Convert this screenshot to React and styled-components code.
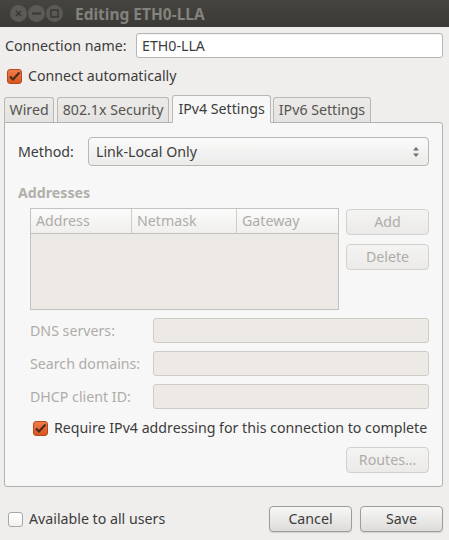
import styled, { createGlobalStyle, css } from 'styled-components';

const GlobalStyle = createGlobalStyle`
  html, body {
    margin: 0;
    padding: 0;
    background: #efeeec;
  }
  body {
    font-family: "Noto Sans", "Open Sans", sans-serif;
    font-size: 14.2px;
    line-height: 18px;
    color: #3c3c3c;
  }
`;

const Window = styled.div`
  width: 449px;
  height: 540px;
  display: flex;
  flex-direction: column;
  background: #efeeec;
  overflow: hidden;
  white-space: nowrap;
`;

const TitleBar = styled.div`
  height: 27px;
  flex: none;
  display: flex;
  align-items: center;
  padding-left: 10px;
  background: linear-gradient(#45443f, #3b3a36);
  box-sizing: border-box;
`;

const WinButtons = styled.div`
  display: flex;
  gap: 1px;
`;

const WinButton = styled.div`
  width: 17px;
  height: 17px;
  border-radius: 50%;
  background: #5b5a55;
  display: flex;
  align-items: center;
  justify-content: center;
`;

const Title = styled.div`
  margin-left: 12px;
  font-weight: bold;
  font-size: 15.5px;
  color: #83827d;
`;

const Body = styled.div`
  flex: 1;
  display: flex;
  flex-direction: column;
  padding: 6px 6px 0 4px;
`;

const Row = styled.div`
  display: flex;
  align-items: center;
  margin-top: ${p => p.$top || 0}px;
  padding-left: ${p => p.$indent || 0}px;
`;

const NameLabel = styled.div`
  width: 131px;
  padding-left: 1px;
`;

const Entry = styled.div`
  flex: 1;
  height: 25px;
  box-sizing: border-box;
  border: 1px solid ${p => (p.$disabled ? '#cfccc8' : '#b8b6b1')};
  border-radius: 3px;
  background: ${p => (p.$disabled ? '#ede9e5' : '#ffffff')};
  display: flex;
  align-items: center;
  padding-left: 5px;
  box-shadow: ${p => (p.$disabled ? 'none' : 'inset 0 1px 1px rgba(0,0,0,0.06)')};
`;

const CheckRow = styled.label`
  display: flex;
  align-items: center;
  gap: 6px;
  height: 18px;
`;

const checkedBox = css`
  background: linear-gradient(#f17c4c, #d9561f);
  border: 1px solid #b44a1e;
`;

const Box = styled.span`
  width: 15px;
  height: 15px;
  box-sizing: border-box;
  border-radius: 3px;
  display: flex;
  align-items: center;
  justify-content: center;
  background: linear-gradient(#ffffff, #f2f1f0);
  border: 1px solid #a9a7a3;
  ${p => p.$checked && checkedBox};
`;

const Tabs = styled.div`
  display: flex;
  align-items: flex-end;
  margin-top: 10px;
  height: 27px;
  position: relative;
  z-index: 1;
`;

const Tab = styled.div`
  height: ${p => (p.$active ? '28px' : '25px')};
  box-sizing: border-box;
  padding: 0 ${p => (p.$active ? 5.5 : 4.5)}px;
  margin-right: ${p => (p.$gap ?? 3)}px;
  display: flex;
  align-items: center;
  border: 1px solid #bab8b4;
  border-bottom: ${p => (p.$active ? '1px solid #f7f7f7' : 'none')};
  border-radius: 3px 3px 0 0;
  background: ${p => (p.$active ? '#f7f7f7' : 'linear-gradient(#ebeae8, #e4e3e1)')};
  color: ${p => (p.$active ? '#3c3c3c' : '#55544f')};
  margin-bottom: ${p => (p.$active ? '-1px' : '0')};
`;

const Page = styled.div`
  height: 365px;
  box-sizing: border-box;
  border: 1px solid #b3b1ad;
  border-radius: 0 3px 3px 3px;
  background: #f7f7f7;
  padding: 14px 13px 0 13px;
  display: flex;
  flex-direction: column;
`;

const MethodLabel = styled.div`
  width: 70px;
`;

const Combo = styled.div`
  flex: 1;
  height: 29px;
  box-sizing: border-box;
  border: 1px solid #b9b7b2;
  border-radius: 4px;
  background: linear-gradient(#fafafa, #ebebea);
  display: flex;
  align-items: center;
  justify-content: space-between;
  padding: 0 8px 0 7px;
`;

const SectionTitle = styled.div`
  margin-top: 18px;
  font-weight: bold;
  color: #b1afaa;
`;

const Addresses = styled.div`
  display: flex;
  margin-top: 6px;
  padding-left: 12px;
  gap: 7px;
`;

const Table = styled.div`
  width: 309px;
  height: 102px;
  box-sizing: border-box;
  border: 1px solid #c4c2be;
  background: #ede9e5;
`;

const TableHead = styled.div`
  display: grid;
  grid-template-columns: 100px 105px 1fr;
  height: 24px;
  background: linear-gradient(#fbfbfb, #f0efee);
  border-bottom: 1px solid #c4c2be;
`;

const HeadCell = styled.div`
  display: flex;
  align-items: center;
  padding-left: 5px;
  color: #aeaca8;
  border-left: ${p => (p.$first ? 'none' : '1px solid #cfcdc9')};
`;

const ButtonCol = styled.div`
  display: flex;
  flex-direction: column;
  gap: 9px;
  padding-top: 1px;
`;

const Button = styled.div`
  width: ${p => p.$width || '83px'};
  height: 26px;
  box-sizing: border-box;
  border-radius: 4px;
  display: flex;
  align-items: center;
  justify-content: center;
  ${p =>
    p.$disabled
      ? css`
          border: 1px solid #d3d1cd;
          background: linear-gradient(#f4f4f3, #eceae8);
          color: #aeaca8;
        `
      : css`
          border: 1px solid #9e9c98;
          background: linear-gradient(#f7f7f6, #dddcda);
          color: #3c3c3c;
          box-shadow: 0 1px 1px rgba(0, 0, 0, 0.12);
        `}
`;

const Fields = styled.div`
  margin-top: 8px;
  padding-left: 12px;
  display: flex;
  flex-direction: column;
  gap: 8px;
`;

const FieldLabel = styled.div`
  width: 123px;
  color: #aeaca8;
`;

const Checks = styled.div`
  margin-top: 10px;
  padding-left: 15px;
`;

const RoutesRow = styled.div`
  display: flex;
  justify-content: flex-end;
  margin-top: 10px;
`;

const Footer = styled.div`
  display: flex;
  align-items: center;
  justify-content: space-between;
  margin-top: 19px;
  padding-left: 4px;
`;

const FooterButtons = styled.div`
  display: flex;
  gap: 8px;
`;

const Tick = () => (
  <svg width="13" height="11" viewBox="0 0 13 11">
    <path d="M2 5.5 L5 8.5 L11.5 1.5" fill="none" stroke="#4a2b1c" strokeWidth="2.2" />
  </svg>
);

const Arrows = () => (
  <svg width="8" height="12" viewBox="0 0 8 12">
    <path d="M4 1 L7 4.5 H1 Z" fill="#6e6d69" />
    <path d="M4 11 L7 7.5 H1 Z" fill="#6e6d69" />
  </svg>
);

const App = () => {
  return (
    <Window>
      <GlobalStyle />
      <TitleBar>
        <WinButtons>
          <WinButton>
            <svg width="7" height="7" viewBox="0 0 7 7">
              <path d="M1 1 L6 6 M6 1 L1 6" stroke="#393834" strokeWidth="1.6" />
            </svg>
          </WinButton>
          <WinButton>
            <svg width="9" height="3" viewBox="0 0 9 3">
              <rect x="0" y="0.5" width="9" height="2" fill="#393834" />
            </svg>
          </WinButton>
          <WinButton>
            <svg width="9" height="9" viewBox="0 0 9 9">
              <rect x="1" y="1" width="7" height="7" fill="none" stroke="#393834" strokeWidth="1.5" />
            </svg>
          </WinButton>
        </WinButtons>
        <Title>Editing ETH0-LLA</Title>
      </TitleBar>
      <Body>
        <Row>
          <NameLabel>Connection name:</NameLabel>
          <Entry>ETH0-LLA</Entry>
        </Row>
        <Row $top={9} $indent={3}>
          <CheckRow>
            <Box $checked><Tick /></Box>
            Connect automatically
          </CheckRow>
        </Row>
        <Tabs>
          <Tab>Wired</Tab>
          <Tab>802.1x Security</Tab>
          <Tab $active $gap={2}>IPv4 Settings</Tab>
          <Tab>IPv6 Settings</Tab>
        </Tabs>
        <Page>
          <Row>
            <MethodLabel>Method:</MethodLabel>
            <Combo>
              <span>Link-Local Only</span>
              <Arrows />
            </Combo>
          </Row>
          <SectionTitle>Addresses</SectionTitle>
          <Addresses>
            <Table>
              <TableHead>
                <HeadCell $first>Address</HeadCell>
                <HeadCell>Netmask</HeadCell>
                <HeadCell>Gateway</HeadCell>
              </TableHead>
            </Table>
            <ButtonCol>
              <Button $disabled>Add</Button>
              <Button $disabled>Delete</Button>
            </ButtonCol>
          </Addresses>
          <Fields>
            <Row>
              <FieldLabel>DNS servers:</FieldLabel>
              <Entry $disabled />
            </Row>
            <Row>
              <FieldLabel>Search domains:</FieldLabel>
              <Entry $disabled />
            </Row>
            <Row>
              <FieldLabel>DHCP client ID:</FieldLabel>
              <Entry $disabled />
            </Row>
          </Fields>
          <Checks>
            <CheckRow>
              <Box $checked><Tick /></Box>
              Require IPv4 addressing for this connection to complete
            </CheckRow>
          </Checks>
          <RoutesRow>
            <Button $disabled>Routes…</Button>
          </RoutesRow>
        </Page>
        <Footer>
          <CheckRow>
            <Box />
            Available to all users
          </CheckRow>
          <FooterButtons>
            <Button>Cancel</Button>
            <Button>Save</Button>
          </FooterButtons>
        </Footer>
      </Body>
    </Window>
  );
};

export default App;
